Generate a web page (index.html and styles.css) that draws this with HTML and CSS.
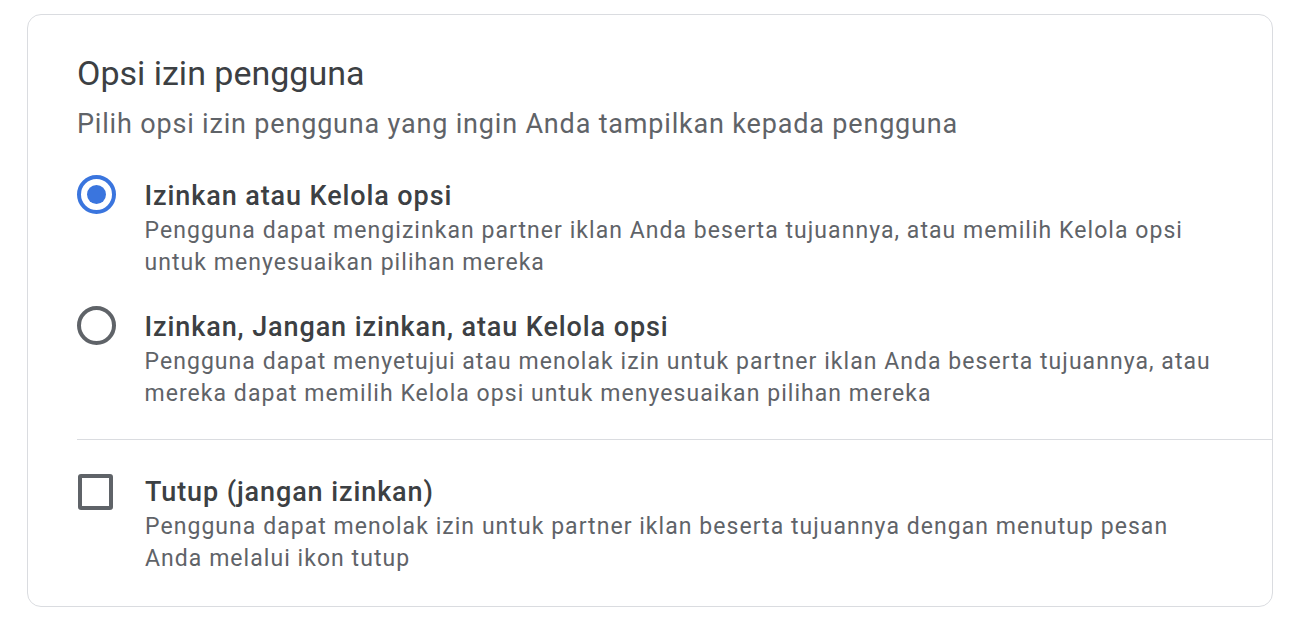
FILE: index.html
```html
<!DOCTYPE html>
<html lang="id">
<head>
<meta charset="utf-8">
<title>Opsi izin pengguna</title>
<link rel="stylesheet" href="styles.css">
</head>
<body>
<section class="card">
  <h1 class="title">Opsi izin pengguna</h1>
  <p class="subtitle">Pilih opsi izin pengguna yang ingin Anda tampilkan kepada pengguna</p>

  <div class="option option-first">
    <span class="radio radio-checked"><span class="dot"></span></span>
    <div class="option-text">
      <div class="option-title">Izinkan atau Kelola opsi</div>
      <div class="option-desc">Pengguna dapat mengizinkan partner iklan Anda beserta tujuannya, atau memilih Kelola opsi untuk menyesuaikan pilihan mereka</div>
    </div>
  </div>

  <div class="option option-second">
    <span class="radio"></span>
    <div class="option-text">
      <div class="option-title">Izinkan, Jangan izinkan, atau Kelola opsi</div>
      <div class="option-desc">Pengguna dapat menyetujui atau menolak izin untuk partner iklan Anda beserta tujuannya, atau mereka dapat memilih Kelola opsi untuk menyesuaikan pilihan mereka</div>
    </div>
  </div>

  <hr class="divider">

  <div class="option option-third">
    <span class="checkbox"></span>
    <div class="option-text">
      <div class="option-title">Tutup (jangan izinkan)</div>
      <div class="option-desc">Pengguna dapat menolak izin untuk partner iklan beserta tujuannya dengan menutup pesan Anda melalui ikon tutup</div>
    </div>
  </div>
</section>
</body>
</html>
```

FILE: styles.css
```css
html, body {
  margin: 0;
  padding: 0;
  background: #ffffff;
}

body {
  font-family: Roboto, "Liberation Sans", Arial, sans-serif;
  padding: 14px 20px 0 27px;
}

.card {
  box-sizing: border-box;
  width: 1246px;
  height: 593px;
  border: 1.5px solid #dadce0;
  border-radius: 14px;
  padding: 38px 0 0 49px;
}

.title {
  margin: 0;
  font-family: Roboto, "Liberation Sans", sans-serif;
  font-weight: 400;
  font-size: 34px;
  line-height: 40px;
  color: #3c4043;
}

.subtitle {
  margin: 15px 0 0 0;
  font-size: 27px;
  line-height: 32px;
  color: #5f6368;
  letter-spacing: 0.82px;
}

.option {
  display: flex;
  align-items: flex-start;
  gap: 28.5px;
}

.option-first {
  margin-top: 40px;
}

.option-second {
  margin-top: 32px;
}

.option-third {
  margin-top: 36px;
  gap: 32px;
}

.option-text {
  width: 1072px;
}

.option-title {
  font-size: 27px;
  font-weight: 500;
  line-height: 32px;
  color: #3c4043;
  letter-spacing: 0.9px;
}

.option-desc {
  margin-top: 3px;
  font-size: 23px;
  line-height: 32px;
  color: #5f6368;
  letter-spacing: 1.05px;
}

.radio {
  box-sizing: border-box;
  flex: none;
  width: 39px;
  height: 39px;
  margin-top: -5px;
  border: 4px solid #5f6368;
  border-radius: 50%;
  display: flex;
  align-items: center;
  justify-content: center;
}

.radio-checked {
  border-color: #3a75de;
}

.dot {
  width: 19px;
  height: 19px;
  border-radius: 50%;
  background: #3a75de;
}

.checkbox {
  box-sizing: border-box;
  flex: none;
  width: 35px;
  height: 36px;
  margin: -2px 0 0 1px;
  border: 4px solid #5f6368;
  border-radius: 3px;
}

.divider {
  margin: 29px 0 0 0;
  border: none;
  border-top: 1.5px solid #dadce0;
  height: 0;
}
```
